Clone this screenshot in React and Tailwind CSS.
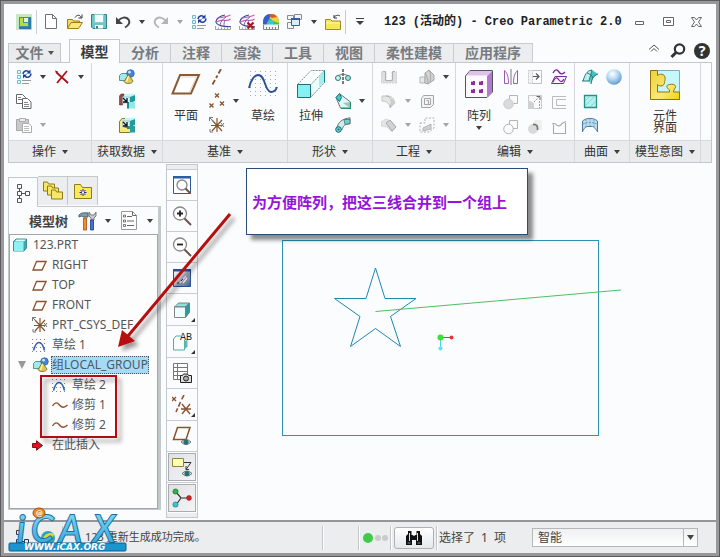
import React from "react";

/* ---------- small helpers ---------- */

function Svg({ size = 16, w, h, box, children, className = "" }) {
  const width = w || size;
  const height = h || size;
  return (
    <svg
      width={width}
      height={height}
      viewBox={box || `0 0 ${width} ${height}`}
      fill="none"
      className={`block shrink-0 ${className}`}
      aria-hidden="true"
    >
      {children}
    </svg>
  );
}

function Caret({ dim, label = "更多" }) {
  return (
    <button type="button" aria-label={label} className="flex h-6 w-[14px] shrink-0 items-center justify-center">
      <Svg w={6} h={4}>
        <path d="M0 0h6L3 4z" fill={dim ? "#a5a5a5" : "#3f3f3f"} />
      </Svg>
    </button>
  );
}

function Tool({ label, children }) {
  return (
    <button type="button" aria-label={label} className="flex size-6 shrink-0 items-center justify-center">
      {children}
    </button>
  );
}

const Blank = () => <div className="h-6 w-[14px]" />;

/* ---------- icons ---------- */

const Logo = () => (
  <Svg>
    <rect width="16" height="16" rx="1" fill="#a9cfe0" />
    <path d="M0 0h16v4H4v12H0z" fill="#c7e6c1" />
    <path d="M3 3h10v10H3z" fill="#3e8fa8" />
    <path d="M4 4h3v5h5v3H4z" fill="#b5dd3c" />
    <path d="M8 4h4v4H8z" fill="#e9f6c9" />
    <path d="M13 3v10H3v2h12V3z" fill="#3179a5" />
  </Svg>
);
const NewDoc = () => (
  <Svg>
    <path d="M2.500.5h7l4 4v10h-11z" fill="#fff" stroke="#707070" />
    <path d="M9.500.5v4h4" stroke="#707070" />
  </Svg>
);
const OpenFolder = () => (
  <Svg>
    <path d="M.5 14V5.500h5l1 1.500h6v2" fill="#f3dc62" stroke="#9a7d18" />
    <path d="M.5 14.500 4 8.500h11.500l-4 6z" fill="#ffe878" stroke="#9a7d18" />
    <path d="M8 3.500c2-3 5-3 6 0M11.500 4h3.500V.5" stroke="#333" />
  </Svg>
);
const Save = () => (
  <Svg>
    <path d="M.5.500h15v14H2L.5 13z" fill="#6cc6cc" stroke="#3f7d88" />
    <rect x="3.500" y=".5" width="9" height="8" fill="#f2fdff" stroke="#8cc" />
    <path d="M4 11h8v3.500H4z" fill="#fff" />
    <path d="M5 12h2v2.500H5z" fill="#3f7d88" />
  </Svg>
);
const Undo = ({ dim }) => (
  <Svg>
    <path d="M3 7c3-4 8-4.500 10.500-1.500 2 3 0 6-3.500 8" stroke={dim ? "#b5b5b5" : "#444"} strokeWidth="2" />
    <path d="M1 3v7h7z" fill={dim ? "#b5b5b5" : "#444"} />
  </Svg>
);
const Redo = () => (
  <div className="-scale-x-100">
    <Undo dim />
  </div>
);
const Regen = () => (
  <Svg>
    <path d="M1.500 1.500h3v3h-3zM1.500 6.500h3v3h-3zM1.500 11.500h3v3h-3z" fill="#e5ffff" stroke="#6cbcc8" />
    <path d="M6 11.500h9M6 14.500h7" stroke="#999" />
    <path d="M7 5c0-3 4-4.500 6-2M15 4.500c0 3.500-4 5-6 2.500" stroke="#1c3f9e" strokeWidth="1.500" />
    <path d="M14.500.5v4h-4zM7 9.500v-4h4z" fill="#1c3f9e" />
  </Svg>
);
const Mesh = ({ off }) => (
  <Svg>
    <path d="M.5 12v3.500h15V12M3.500 13.500v2M6.500 13.500v2M9.500 13.500v2M12.500 13.500v2" stroke="#8a8a8a" strokeWidth=".8" />
    <path d="M15.500 12.500C8 13 1.500 11 1 8c-.5-3 4-6 9-7" stroke="#39479a" strokeWidth="1.200" />
    <path d="M3 4c4-.5 8-1 12.500-3M1.500 8c4-2 7-2 9-1.500 2 0 4-.5 5-1.500" stroke="#c85aae" strokeWidth="1.200" />
    <path d="M5 11c1-4 3-6 6-8M9 12c0-2 0-4 1-6" stroke="#7a50b0" strokeWidth=".9" />
    {off && <path d="M8.500 8.500l6 6M14.500 8.500l-6 6" stroke="#b0141c" strokeWidth="2.200" />}
  </Svg>
);
const ColorDome = () => (
  <Svg>
    <path d="M0 9C0 3 3 0 8 0s8 3 8 9v2H0z" fill="#38c35a" />
    <path d="M0 9C0 3 3 0 8 0L6 5l-3 6H0z" fill="#3b58d6" />
    <path d="M8 0c5 0 8 3 8 9l-6-2-3-3z" fill="#e8d637" />
    <path d="M8 0c3 0 5 1 6 3L9 4 6 2z" fill="#e0552c" />
    <path d="M4 9c1-3 5-4 7-1l-1 3H4z" fill="#33c8d8" />
    <path d="M0 10.500h16v5H0z" fill="#f2f2f2" />
    <path d="M.5 11v4.500h15V11M3.500 13v2M6.500 13v2M9.500 13v2M12.500 13v2" stroke="#777" strokeWidth=".9" />
  </Svg>
);
const Windows = () => (
  <Svg>
    <path d="M.5 1.500h6v4h-6zM7.500.500h7v5h-7zM.5 8.500h6v6h-6z" fill="#f4f4f4" stroke="#8b8b8b" />
    <path d="M4.500 4.500h8v7h-8z" fill="#dcecff" stroke="#2f5fa5" />
    <path d="M4 4h9v2H4z" fill="#2f5fa5" />
  </Svg>
);
const YellowFolder = () => (
  <Svg>
    <path d="M.5 15.500v-10h5l1.500 1.500h8.500v8.500z" fill="#f5e65c" stroke="#a18a22" />
    <path d="M1 9h14" stroke="#fff7ae" />
    <path d="M9 3.500c1-2 4-3 6-1.500M9 1v3h3" stroke="#333" />
  </Svg>
);
const RedX = () => (
  <Svg>
    <path d="M2 3l12 11M13 2 3 14" stroke="#a8121a" strokeWidth="1.800" />
    <path d="M1 2l3 1M14 14l-2-1" stroke="#a8121a" />
  </Svg>
);
const Copy = () => (
  <Svg>
    <path d="M.5 1.500h6l3 3v6h-9z" fill="#fff" stroke="#666" />
    <path d="M2 4.500h3M2 6.500h4" stroke="#777" />
    <path d="M6.500 5.500h5l3.500 3.500v6.500H6.500z" fill="#fff" stroke="#666" />
    <path d="M8 9.500h4M8 11.500h5M8 13.500h5" stroke="#888" />
  </Svg>
);
const Paste = () => (
  <Svg>
    <path d="M.5 2.500h12v11H.5z" fill="#c9c9c9" stroke="#a9a9a9" />
    <path d="M3.500 1.500h6v3h-6z" fill="#eee" stroke="#aaa" />
    <path d="M6.500 6.500h6l3 2.500v6.500h-9z" fill="#fff" stroke="#aaa" />
    <path d="M8 9.500h5M8 11.500h5M8 13.500h5" stroke="#bbb" />
  </Svg>
);
const UserFeature = () => (
  <Svg>
    <path d="M.5 6.500 2.500 4.500h6v5l-2 2h-6z" fill="#a5eaea" stroke="#2e7f90" strokeWidth=".8" />
    <circle cx="11.500" cy="4.500" r="3.800" fill="#3f85e0" stroke="#1d4fa0" strokeWidth=".6" />
    <circle cx="10.500" cy="3.200" r="1.400" fill="#cfe4ff" />
    <path d="M9.500 5.500 14 12c-.5 3-7.500 3.500-9 .500z" fill="#dcc85a" stroke="#6f5f14" strokeWidth=".8" />
    <path d="M9.500 7 7.500 13" stroke="#fff6b0" strokeWidth="1.300" />
  </Svg>
);
const CopyGeom = ({ yellow }) => (
  <Svg>
    {yellow ? (
      <path d="M.5 4.500 3 1.500h3v9h5v5H.5z" fill="#f6ee8a" stroke="#8c7a1c" />
    ) : (
      <path d="M.5 3 2 1h3v8H3.500v3H.5z" fill="#9a4a46" stroke="#6d2a2a" strokeWidth=".6" />
    )}
    <path d="M4 4 6.500.8H16V4z" fill="#c5f5f5" />
    <path d="M3.500 4h7.500v6H3.500z" fill="#d6fafa" stroke="#7ab" strokeWidth=".6" />
    <path d="M11 4l5-2v6l-5 2z" fill="#1f9b9d" />
    <path d="M8 9h8v6.500H8z" fill={yellow ? "#2d9d98" : "#8fe9e8"} />
    <path d="M8 9h2v6.500H8z" fill="#178f92" />
    <path d="M4 5l3.500 3.500M8 5v4H4" stroke="#111" strokeWidth="1.300" />
    {yellow && <path d="M1 12h10v3H1z" fill="#f6e87a" />}
  </Svg>
);
const PlaneBig = () => (
  <Svg w={30} h={28}>
    <path d="M9 5h19l-8 18.500H1.500z" fill="#fff" stroke="#8a5a34" strokeWidth="2" />
    <path d="M10 7h15.500l-7 15" stroke="#e3d3c0" strokeWidth="1" />
  </Svg>
);
const AxisIcon = () => (
  <Svg>
    <path d="M12 0 9.500 4.500M8.500 6.500 7 9M6 11l-2.500 4.500" stroke="#8b5230" strokeWidth="1.800" />
  </Svg>
);
const Points = () => (
  <Svg>
    <path d="M6 .5l4 4M10 .5l-4 4M.5 10.500l4 4M4.500 10.500l-4 4M11 8.500l4 4M15 8.500l-4 4" stroke="#8b5230" strokeWidth="1.300" />
  </Svg>
);
const Csys = () => (
  <Svg>
    <path d="M3 3l10 11M13 3 3 14M8 1v14M2 8.500h11" stroke="#8b5230" strokeWidth="1.200" />
    <path d="M.5.500l4 4M.5 4V.5H4M1 12v3h3M12 6l3 4M15 6l-3 4" stroke="#777" strokeWidth="1" />
  </Svg>
);
const dotRows = [1, 5, 9, 13, 17, 21, 25];
const SketchBig = () => (
  <Svg w={30} h={28}>
    {dotRows.map((y) => (
      <path key={y} d={`M2 ${y + 0.5}h28`} stroke="#a3aebf" strokeWidth="1" strokeDasharray="1 4" />
    ))}
    <path d="M1 18C3 9 7 5 10 5c8 0 6 16 13 17 3 0 5-2 6-5" stroke="#2a4f94" strokeWidth="1.900" />
  </Svg>
);
const Extrude = () => (
  <Svg w={28} h={28}>
    <path d="M13.500 14.500 27.500.500v12L14 27z" fill="#eaffff" stroke="#888" strokeDasharray="2 1" />
    <path d="M.5 14.500 14 .5h13.500L14 14.500z" fill="#f7ffff" stroke="#888" strokeDasharray="2 1" />
    <path d="M22 6 27 1v11l-5 5z" fill="#a5ecea" />
    <path d="M27.500.5v12" stroke="#178080" />
    <path d="M.5 14.500h13v13H.5z" fill="#86f1f2" stroke="#276a78" />
  </Svg>
);
const Revolve = () => (
  <Svg>
    <path d="M8 0v16" stroke="#222" strokeWidth="1.200" strokeDasharray="3 1" />
    <circle cx="3" cy="9" r="2.500" fill="#c5f3f0" stroke="#2a7a78" />
    <circle cx="13" cy="9" r="2.500" fill="#9be0dc" stroke="#2a7a78" />
    <path d="M3 6.500 8 5l5 1.500" stroke="#777" />
  </Svg>
);
const Blend = () => (
  <Svg>
    <path d="M5 1 1 4.500 5.500 15h10V9z" fill="#d9f8f6" stroke="#5a7a7a" />
    <path d="M1 4.500 4.500.500l2 4-2 4z" fill="#42cbc8" stroke="#1c6f6f" />
    <path d="M8 10l7-1v6z" fill="#b5bcbc" />
    <path d="M6 15.500h9.500V9" stroke="#258d6a" strokeWidth="1.200" />
  </Svg>
);
const Sweep = () => (
  <Svg>
    <path d="M2 11C3 5 7 2 15 .8v6c-5 .2-7 2-8 6z" fill="#cdeeed" stroke="#5a7a7a" />
    <path d="M9 2.500h6v4l-5 1z" fill="#6fd2cf" stroke="#555" strokeWidth=".7" />
    <circle cx="3.500" cy="12.500" r="2.800" fill="#68e0de" stroke="#195f66" />
    <circle cx="3.500" cy="12.500" r="1" fill="#195f66" />
  </Svg>
);
const Hole = () => (
  <Svg>
    <path d="M0 3h5v9h6V3h5v11H0z" fill="#dedede" stroke="#d0d0d0" strokeDasharray="2 1" />
    <path d="M2 2.500h2.500v9h7v-9H14" stroke="#b0b0b0" />
  </Svg>
);
const Round = () => (
  <Svg>
    <path d="M1 3h6c4 0 6 3 7 7l-5 5c0-4-3-7-8-7z" fill="#e6e6e6" stroke="#c5c5c5" />
    <path d="M5 3c3 0 5 2 6 6l-2 5" stroke="#aaa" />
    <path d="M9 5c3 1 4 3 5 5l-4 3z" fill="#cdcdcd" />
  </Svg>
);
const Chamfer = () => (
  <Svg>
    <path d="M0 5l5-3 5 2 5 6-4 5-5-5-6-1z" fill="#e6e6e6" stroke="#ccc" strokeDasharray="2 1" />
    <path d="M5 6l4-3 6 7-4 4z" fill="#d3d3d3" stroke="#ababab" />
  </Svg>
);
const Draft = () => (
  <Svg>
    <path d="M1 8h5v6H1z" fill="#e9e9e9" stroke="#b5b5b5" />
    <path d="M6 4l4-3 5 5v5l-6 4-3-1z" fill="#d3d3d3" stroke="#a5a5a5" />
    <path d="M6 4c2 3 3 6 3 11M10 1c2 3 2 6 1 12" stroke="#a5a5a5" />
  </Svg>
);
const Shell = () => (
  <Svg>
    <path d="M4.500 2.500h10v9l-3 3h-9v-9z" fill="#f3f3f3" stroke="#a5a5a5" />
    <path d="M5.500 5.500h6v6h-6zM7.500 7.500h2v4" stroke="#a5a5a5" />
  </Svg>
);
const Rib = () => (
  <Svg>
    <path d="M1 6h5V1h9v10l-5 4H1z" stroke="#aeaeae" strokeDasharray="2 1.500" />
    <path d="M4 11l8-4v5l-8 2z" fill="#cfcfcf" stroke="#b5b5b5" />
  </Svg>
);
const PatternBig = () => (
  <Svg w={28} h={28}>
    <path d="M.5 6 5 .5h22.500V22L22 27.500H.5z" fill="#fff" stroke="#555" />
    <path d="M22 6l5-5v21l-5 5z" fill="#b07ad0" />
    <path d="M1.500 5.500 5 1h22l-5 4.500z" fill="#dcc3ea" />
    <path d="M1 6h21v21H1z" fill="#fdf9ff" />
    {[11, 19].map((y) =>
      [6, 14].map((x) => (
        <g key={`${x}-${y}`}>
          <path d={`M${x} ${y}h4v4h-4z`} fill="#8c2ba3" />
          <path d={`M${x} ${y}h2v1h-2z`} fill="#d9a5e6" />
        </g>
      ))
    )}
  </Svg>
);
const Mirror = () => (
  <Svg>
    <path d="M1.500 14.500V1.500C4 4 5.500 7 5.500 14.500zM14.500 14.500V1.500C12 4 10.500 7 10.500 14.500z" stroke="#9a5ab0" />
    <path d="M8 0v16" stroke="#777" />
  </Svg>
);
const Extend = () => (
  <Svg>
    <path d="M5 1.500h9.500v13H5" stroke="#c0c0c0" />
    <path d="M1.500 1.500h4v13h-4z" fill="#f1f1f1" stroke="#c8c8c8" strokeDasharray="2 1" />
    <path d="M6 7.500h6M9 4.500l3 3-3 3" stroke="#555" strokeWidth="1.200" />
  </Svg>
);
const Project = () => (
  <Svg>
    <path d="M2 4c2-4 4-4 6-1s4 2 6 0" stroke="#7e2697" strokeWidth="1.400" />
    <path d="M4 7.500h11.500l-3 7H.5z" fill="#fbf3fd" stroke="#7e2697" />
    <path d="M2 13c2-5 4-5 6-2s4 1 5-1" stroke="#7e2697" strokeWidth="1.200" />
  </Svg>
);
const Merge = ({ hollow }) => (
  <Svg>
    <path d="M6.500 1.500h8v8h-8z" fill="#fafafa" stroke="#b5b5b5" />
    <circle cx="5.500" cy="10" r="4.800" fill={hollow ? "#fafafa" : "#dadada"} stroke={hollow ? "#b5b5b5" : "#cfcfcf"} />
  </Svg>
);
const Offset = () => (
  <Svg>
    <path d="M1.500 1.500h13v13h-13z" fill="#fafafa" stroke="#c8c8c8" />
    <path d="M1 6l6 3v6H1z" fill="#d0d0d0" />
    <path d="M12.500 7v7M7 8l6-6" stroke="#999" strokeDasharray="2 1" />
    <path d="M9.500 2.500H13V6" stroke="#666" />
  </Svg>
);
const Thicken = () => (
  <Svg>
    <path d="M15 2.500H1.500v12H15M15 5.500H5.500v6H15" stroke="#bbb" />
  </Svg>
);
const Intersect = () => (
  <Svg>
    <path d="M7 1h8v10H7z" fill="#efefef" />
    <circle cx="6" cy="10" r="5" fill="#dadada" />
    <path d="M6 5.500c4-.5 5 2 4.500 5.500" stroke="#777" strokeWidth="1.800" />
  </Svg>
);
const Solidify = () => (
  <Svg>
    <path d="M1 5c2-1 4 0 5 1.500 2 1 4 0 5-2l4-2M2.500 5.500v9h12V4" stroke="#aaa" strokeWidth="1.100" />
  </Svg>
);
const Boundary = () => (
  <Svg>
    <path d="M1 12C2.500 6 5 2 11 1l5 4c-5 2-6 5-7 10-2-2-4-3-8-3z" fill="#b9f0ee" />
    <path d="M10 1.500c2 1 4 2 6 4-4 1-6 5-7 10L8 9z" fill="#42c4bb" />
    <path d="M0 12h8M5 4c3 1 5 2 6 5M10 1C4 2 3 6 1 12M16 5c-5 2-6 5-7 10M10 1c-1 4-2 7-3 11" stroke="#246c7a" strokeWidth=".9" />
  </Svg>
);
const FillIcon = () => (
  <Svg>
    <path d="M2.500 2.500h12v12h-12z" fill="#b4f1ea" stroke="#2a8f8b" strokeWidth="1.300" />
    <path d="M3 8l5-5M3 13 13 3M8 14l6-6" stroke="#83d8d0" />
  </Svg>
);
const StyleIcon = () => (
  <Svg>
    <path d="M.5 4c4-3.500 11-3.500 15 0v11c-2-4-4-5-5-5.500H5C3 10 1 13 .5 15z" fill="#bcdcee" stroke="#4d7ca0" />
    <path d="M4 2.500V10M8 1.500V9M12 2.500V10M1 7c4-2 10-2 14 0" stroke="#6ea5c8" strokeDasharray="2 1" />
  </Svg>
);
const Sphere = () => (
  <Svg>
    <defs>
      <radialGradient id="sphere" cx=".4" cy=".3" r=".8">
        <stop offset="0" stopColor="#fff" />
        <stop offset=".4" stopColor="#bcdcf5" />
        <stop offset="1" stopColor="#4f8cc4" />
      </radialGradient>
    </defs>
    <circle cx="8" cy="8" r="7.800" fill="url(#sphere)" />
  </Svg>
);
const Puzzle = () => (
  <Svg w={30} h={30}>
    <defs>
      <linearGradient id="gold" x1="0" y1="0" x2="1" y2="1">
        <stop offset="0" stopColor="#f0d235" />
        <stop offset=".6" stopColor="#f8e875" />
        <stop offset="1" stopColor="#f3d500" />
      </linearGradient>
    </defs>
    <path d="M.5.500h29v29H.5z" fill="#c4f8fa" stroke="#8ab" />
    <path
      d="M.5.500h7v5c2-2 7-2 7.500 2 .5 3-.5 3.500-.5 5 0 3-4 5-7 2v7.500h12v-2c-3-2-4-5 0-5.500 3-.5 5.500-.5 6 2 .3 2-2 2.500-2 5.500h6v7.500H.5z"
      fill="url(#gold)"
      stroke="#97700e"
    />
  </Svg>
);

const TreeTab = () => (
  <Svg w={16} h={20}>
    <path d="M2.500 1.500h4v4h-4zM2.500 8.500h4v4h-4zM10.500 8.500h4v4h-4zM2.500 15.500h4v4h-4zM4.500 5.500v3M4.500 12.500v3M6.500 10.500h4" stroke="#555" />
  </Svg>
);
const Folders = () => (
  <Svg w={20} h={20}>
    {[0, 4, 8].map((d) => (
      <path key={d} d={`M${d + 0.5} ${d + 10}v-9h4l1 2h6v7z`} fill="#f6e766" stroke="#8e7b21" />
    ))}
  </Svg>
);
const FavFolder = () => (
  <Svg w={18} h={16}>
    <path d="M.5 15.500V1.500h6l2 3h9v11z" fill="#f8ea5a" stroke="#8e7b21" />
    <path d="M9 6v7M5.500 9.500h7M6.500 7l5 5M11.500 7l-5 5" stroke="#1b2f9c" />
    <path d="M8 8.500h2v2H8z" fill="#fff" />
  </Svg>
);
const Tools = () => (
  <Svg w={19} h={20}>
    <path d="M1 4c2-2 4-2.500 9-2v4H6C4 5 3 5 1 6z" fill="#7fa0ab" stroke="#46606a" />
    <path d="M5.500 7h3v12h-3z" fill="#f28d2c" stroke="#a8481a" strokeWidth=".8" />
    <path d="M11 1v4l2 2v2h3V7l2-2V1l-2 3h-3z" fill="#c9c9c9" stroke="#666" strokeWidth=".8" />
    <path d="M12.500 9h3v10h-3z" fill="#3f73cf" stroke="#1d3c88" strokeWidth=".8" />
  </Svg>
);
const ListIcon = () => (
  <Svg w={16} h={19}>
    <path d="M.5.500h11l4 4v14H.5z" fill="#fff" stroke="#999" />
    <path d="M11.500.500v4h4M6 5.500h5M6 10h7M6 14.500h7" stroke="#666" />
    <path d="M2.500 4h2v2h-2zM2.500 9h2v2h-2zM2.500 13.500h2v2h-2z" stroke="#555" strokeWidth=".8" />
  </Svg>
);

const Part = () => (
  <Svg w={14} h={14}>
    <path d="M.5 3.500 3 1h10.500v9L11 13H.5z" fill="#3aa9ad" stroke="#2c7780" strokeWidth=".8" />
    <path d="M1 4h9.500v9H1z" fill="#8cf2f3" />
    <path d="M1.500 3.500 3.500 1.500H13l-2 2z" fill="#dcffff" />
  </Svg>
);
const PlaneSm = () => (
  <Svg w={15} h={11}>
    <path d="M4.500 1.500h9.500l-4 8.500H1z" stroke="#8b5230" strokeWidth="1.300" fill="#fff" />
  </Svg>
);
const SketchSm = () => (
  <Svg w={14} h={13}>
    <path d="M0 .5h14M0 4.500h14M0 8.500h14M0 12.500h14" stroke="#5a8fd0" strokeDasharray="1 3" />
    <path d="M1.500 11.500C3 6 5 3.500 7 3.500s4 2 5.500 8" stroke="#2a60b8" strokeWidth="1.500" />
  </Svg>
);
const TrimSm = () => (
  <Svg w={16} h={8}>
    <path d="M.5 5C3 1 5 1 7.500 4s5 3 8 0" stroke="#8b5230" strokeWidth="1.400" />
  </Svg>
);
const InsertArrow = () => (
  <Svg w={11} h={11}>
    <path d="M.5 3.500h4V.8l6 4.700-6 4.700V7.500h-4z" fill="#e0101c" stroke="#7d1116" />
  </Svg>
);

const Lens = ({ sign, framed }) => (
  <Svg size={20}>
    {framed && <path d="M1.500 1.500h17v17h-17z" fill="#fff" stroke="#2f5b9e" />}
    {framed && <path d="M1 1h18v2.500H1z" fill="#2b5ba5" />}
    <circle cx={framed ? 10 : 8} cy={framed ? 10 : 7.5} r={framed ? 5 : 6.5} fill="#fdfdfd" stroke="#888" strokeWidth="1.300" />
    <path d={framed ? "M13.500 13.500l5 5" : "M12.500 12.500l6.500 6.500"} stroke="#6b5548" strokeWidth="2" />
    {sign && <path d={sign === "+" ? "M5 7.500h6M8 4.500v6" : "M5 7.500h6"} stroke="#222" strokeWidth="1.800" />}
  </Svg>
);
const Repaint = () => (
  <Svg size={20}>
    <defs>
      <linearGradient id="repaint" x1="0" y1="0" x2="1" y2="1">
        <stop offset="0" stopColor="#fdfdff" />
        <stop offset=".5" stopColor="#b5bccf" />
        <stop offset="1" stopColor="#36558f" />
      </linearGradient>
    </defs>
    <path d="M1.500 1.500h17v17h-17z" fill="url(#repaint)" stroke="#2a4f94" />
    <path d="M1 1h18v2.500H1z" fill="#2a4f94" />
    <path d="M8 15l6-7M11 15l4-5" stroke="#fff" strokeWidth="1.300" />
    <path d="M5 15h2M9 13l2-2" stroke="#333" />
  </Svg>
);
const DisplayCube = () => (
  <Svg size={20}>
    <path d="M2.500 7 6.500 3h11l-4 4z" fill="#8ce0e0" stroke="#777" strokeWidth=".9" />
    <path d="M13.500 7l4-4v9.500l-4 5z" fill="#2f9a9b" stroke="#777" strokeWidth=".9" />
    <path d="M2.500 7h11v10.500h-11z" fill="#eefcfc" stroke="#777" strokeWidth=".9" />
  </Svg>
);
const ABIcon = () => (
  <Svg size={20}>
    <path d="M9 4H4L1.500 7v11h11V8" fill="#fafefe" stroke="#5aa" />
    <path d="M12.500 9.500l3-2.500v7.500l-3 3z" fill="#5fb8b8" />
    <text x="8" y="8" fontSize="10" fontFamily="Liberation Mono" fill="#222">AB</text>
  </Svg>
);
const CameraTable = () => (
  <Svg size={20}>
    <path d="M1.500.500h14v16h-14zM1.500 4.500h14M1.500 8.500h14M1.500 12.500h14M5.500.500v16" fill="#fff" stroke="#777" />
    <path d="M8.500 12.500h2l1-1.500h4l1 1.500h3v7h-11z" fill="#ddd" stroke="#222" />
    <circle cx="14" cy="15.500" r="2.500" fill="#aaa" stroke="#222" />
  </Svg>
);
const DatumDisplay = () => (
  <Svg size={20}>
    <path d="M12 0 9.500 5M8.500 7 4 17" stroke="#8b5230" strokeWidth="1.600" strokeDasharray="5 2" />
    <path d="M0 2l4 4M4 2 0 6M10 9l8 10M18 9l-8 10M9 14h10" stroke="#8b5230" strokeWidth="1.300" />
  </Svg>
);
const Eye = ({ x, y }) => (
  <g>
    <path d={`M${x} ${y + 3}q5-5 10 0q-5 5-10 0z`} fill="#d9e8e8" stroke="#555" strokeWidth=".8" />
    <circle cx={x + 5} cy={y + 3} r="2.600" fill="#27707a" />
  </g>
);
const PlaneEye = () => (
  <Svg size={20}>
    <path d="M5.500 1.500H18l-4 12H1.500z" fill="#fff" stroke="#8b5230" strokeWidth="1.500" />
    <Eye x={9} y={13} />
  </Svg>
);
const NoteEye = () => (
  <Svg size={20}>
    <path d="M.5 1.500h11v8H.5z" fill="#ffffb4" stroke="#8c8a3a" />
    <path d="M12 5.500h7l-5 7M14 9v3.500h3" stroke="#333" />
    <Eye x={10} y={13.500} />
  </Svg>
);
const SpinCenter = () => (
  <Svg size={20}>
    <path d="M4 4l5 6h8M9 10l-5 7" stroke="#333" strokeWidth="1.200" />
    <circle cx="3.500" cy="3.500" r="2.600" fill="#2fb541" stroke="#175f20" strokeWidth=".6" />
    <circle cx="17" cy="10" r="2.400" fill="#dc2020" stroke="#7d1010" strokeWidth=".6" />
    <circle cx="3.500" cy="16.500" r="2.600" fill="#35c9cf" stroke="#176a6f" strokeWidth=".6" />
  </Svg>
);
const Binoculars = () => (
  <Svg w={18} h={16}>
    <path d="M3 1h3.500v4h1L9 6l1.500-1h1V1H15v3l2 2v9h-6v-5H7v5H1V6l2-2z" fill="#111" />
    <path d="M4.500 3v8M12.500 3v8" stroke="#ddd" />
    <path d="M2.500 13h3M12.500 13h3" stroke="#888" />
  </Svg>
);

/* ---------- title bar ---------- */

function TitleBar() {
  return (
    <header className="flex h-[35px] items-center pl-3 pr-2">
      <Logo />
      <div className="ml-1 mr-[2px] h-6 w-px bg-[#d0d0d0]" />
      <Tool label="新建"><NewDoc /></Tool>
      <Tool label="打开"><OpenFolder /></Tool>
      <Tool label="保存"><Save /></Tool>
      <Tool label="撤消"><Undo /></Tool>
      <Caret />
      <Tool label="重做"><Redo /></Tool>
      <Caret dim />
      <Tool label="重新生成"><Regen /></Tool>
      <Tool label="网格"><Mesh /></Tool>
      <Tool label="关闭网格"><Mesh off /></Tool>
      <Tool label="外观"><ColorDome /></Tool>
      <Tool label="窗口"><Windows /></Tool>
      <Caret />
      <Tool label="关闭窗口"><YellowFolder /></Tool>
      <div className="mr-[6px] h-6 w-px bg-[#c9c9c9]" />
      <button type="button" aria-label="自定义" className="flex h-6 w-4 items-center justify-center">
        <Svg w={8} h={7}>
          <path d="M0 .5h8" stroke="#3f3f3f" />
          <path d="M0 3h8L4 7z" fill="#3f3f3f" />
        </Svg>
      </button>
      <h1 className="ml-4 flex-1 whitespace-pre font-['Liberation_Mono','Noto_Sans_CJK_SC',monospace] text-[12px] font-bold leading-4 text-[#222]">
        {"123 (活动的) - Creo Parametric 2.0"}
      </h1>
      <div className="flex gap-1">
        <Tool label="最小化">
          <Svg w={10} h={8}><path d="M.5 3.500h8v3h-8z" fill="#fff" stroke="#666" /></Svg>
        </Tool>
        <Tool label="最大化">
          <Svg w={11} h={10}><path d="M.5.500h10v8H.5zM3.500 3.500h4v2h-4z" fill="#fff" stroke="#666" /></Svg>
        </Tool>
        <Tool label="关闭">
          <Svg w={11} h={10}>
            <path d="M.5.500h3l2 2.500 2-2.500h3L7.500 5l3 4.500h-3l-2-2.500-2 2.500h-3l3-4.500z" fill="#fff" stroke="#666" />
          </Svg>
        </Tool>
      </div>
    </header>
  );
}

/* ---------- ribbon ---------- */

const ribbonTabs = ["分析", "注释", "渲染", "工具", "视图", "柔性建模", "应用程序"];

function RibbonTabs() {
  return (
    <nav className="flex h-[23px] items-end pl-1 pr-1 text-[14px] font-bold leading-4 text-[#777b80]">
      <button type="button" className="flex h-[19px] w-[53px] items-center justify-center gap-1 border border-b-0 border-[#c3c8cb] bg-[#e9ebed]">
        文件
        <Svg w={6} h={4}><path d="M0 0h6L3 4z" fill="#555" /></Svg>
      </button>
      <div className="w-2" />
      <button type="button" className="relative top-px z-10 h-[24px] w-[51px] border border-b-0 border-[#c3c8cb] bg-[#fbfcfd] text-[#3d3d3d]">
        模型
      </button>
      {ribbonTabs.map((t) => (
        <button
          key={t}
          type="button"
          className={`flex h-[19px] items-center justify-center border-r border-t border-[#c9cdd0] bg-[#ebedef] ${
            t.length > 2 ? "w-[79px]" : "w-[51px]"
          }`}
        >
          {t}
        </button>
      ))}
      <div className="ml-auto flex h-full items-center gap-1">
        <button type="button" aria-label="折叠功能区" className="flex size-5 items-center justify-center">
          <Svg w={12} h={9} className="mb-1">
            <path d="M1 5.500 6 1l5 4.500M3 7.500l3-3 3 3" stroke="#555" />
          </Svg>
        </button>
        <button type="button" aria-label="搜索" className="flex size-5 items-center justify-center">
          <Svg>
            <circle cx="9.500" cy="6" r="4.700" stroke="#333" strokeWidth="2.200" />
            <path d="M6 9.500 1.500 14" stroke="#333" strokeWidth="3" />
          </Svg>
        </button>
        <button type="button" aria-label="帮助" className="flex size-5 items-center justify-center">
          <span className="flex size-4 items-center justify-center rounded-full bg-[#333] text-[14px] font-bold leading-4 text-white">?</span>
        </button>
      </div>
    </nav>
  );
}

function Group({ title, width, children, className = "", last }) {
  return (
    <section className={`flex shrink-0 flex-col border-r border-[#d5d9db] ${width}`}>
      <div className={`flex h-[77px] pt-[2px] ${className}`}>{children}</div>
      <button
        type="button"
        className="flex h-[22px] items-center justify-center gap-[6px] whitespace-nowrap border-t border-[#d5d9db] bg-[#e9ebed] text-[12px] text-[#333]"
      >
        {title}
        {!last && <Svg w={6} h={4}><path d="M0 0h6L3 4z" fill="#3f3f3f" /></Svg>}
      </button>
    </section>
  );
}

const Col = ({ children }) => <div className="flex flex-col">{children}</div>;

function BigTool({ icon, children, caret }) {
  return (
    <button type="button" className="flex w-9 shrink-0 flex-col items-center pt-[5px] text-[12px] leading-3 text-[#333]">
      <span className="flex h-[36px] items-start justify-center">{icon}</span>
      <span className="block pt-1">{children}</span>
      {caret && <Svg w={6} h={4} className="mt-1"><path d="M0 0h6L3 4z" fill="#3f3f3f" /></Svg>}
    </button>
  );
}

function Ribbon() {
  return (
    <div className="mx-1 flex overflow-hidden border border-[#c3c8cb] bg-[#fbfcfd]">
      <Group title="操作" width="w-[83px]" className="pl-[3px]">
        <Col>
          <Tool label="重新生成"><Regen /></Tool>
          <Tool label="复制"><Copy /></Tool>
          <Tool label="粘贴"><Paste /></Tool>
        </Col>
        <Col><Caret /><div className="h-6" /><Caret dim /></Col>
        <Tool label="删除"><RedX /></Tool>
        <Caret />
      </Group>
      <Group title="获取数据" width="w-[71px]" className="justify-center">
        <Col>
          <Tool label="用户定义特征"><UserFeature /></Tool>
          <Tool label="复制几何"><CopyGeom /></Tool>
          <Tool label="收缩包络"><CopyGeom yellow /></Tool>
        </Col>
      </Group>
      <Group title="基准" width="w-[125px]" className="pl-[5px]">
        <BigTool icon={<PlaneBig />}>平面</BigTool>
        <div className="ml-[1px]">
          <Tool label="轴"><AxisIcon /></Tool>
          <Tool label="点"><Points /></Tool>
          <Tool label="坐标系"><Csys /></Tool>
        </div>
        <Col><Blank /><Caret /></Col>
        <div className="ml-[2px]"><BigTool icon={<SketchBig />}>草绘</BigTool></div>
      </Group>
      <Group title="形状" width="w-[85px]" className="pl-[5px]">
        <BigTool icon={<Extrude />}>拉伸</BigTool>
        <div className="ml-[2px]">
          <Tool label="旋转"><Revolve /></Tool>
          <Tool label="混合"><Blend /></Tool>
          <Tool label="扫描"><Sweep /></Tool>
        </div>
        <Col><Blank /><Caret /></Col>
      </Group>
      <Group title="工程" width="w-[83px]" className="pl-1">
        <Col>
          <Tool label="孔"><Hole /></Tool>
          <Tool label="倒圆角"><Round /></Tool>
          <Tool label="倒角"><Chamfer /></Tool>
        </Col>
        <Col><Blank /><Caret dim /><Caret dim /></Col>
        <Col>
          <Tool label="拔模"><Draft /></Tool>
          <Tool label="壳"><Shell /></Tool>
          <Tool label="筋"><Rib /></Tool>
        </Col>
        <Col><Caret /><Blank /><Caret dim /></Col>
      </Group>
      <Group title="编辑" width="w-[119px]" className="pl-[5px]">
        <BigTool icon={<PatternBig />} caret>阵列</BigTool>
        <div className="ml-[2px] grid grid-cols-3">
          <Tool label="镜像"><Mirror /></Tool>
          <Tool label="延伸"><Extend /></Tool>
          <Tool label="投影"><Project /></Tool>
          <Tool label="修剪"><Merge /></Tool>
          <Tool label="偏移"><Offset /></Tool>
          <Tool label="加厚"><Thicken /></Tool>
          <Tool label="合并"><Merge hollow /></Tool>
          <Tool label="相交"><Intersect /></Tool>
          <Tool label="实体化"><Solidify /></Tool>
        </div>
      </Group>
      <Group title="曲面" width="w-[55px]" className="pl-[3px]">
        <Col>
          <Tool label="边界混合"><Boundary /></Tool>
          <Tool label="填充"><FillIcon /></Tool>
          <Tool label="样式"><StyleIcon /></Tool>
        </Col>
        <Tool label="自由式"><Sphere /></Tool>
      </Group>
      <Group title="模型意图" width="w-[71px]" className="justify-center">
        <BigTool icon={<Puzzle />}>元件<br />界面</BigTool>
      </Group>
      <div className="flex flex-1 flex-col">
        <div className="h-[77px]" />
        <div className="h-[22px] border-t border-[#d5d9db] bg-[#e9ebed]" />
      </div>
    </div>
  );
}

/* ---------- model tree ---------- */

const rootItems = [
  { icon: <PlaneSm />, name: "RIGHT" },
  { icon: <PlaneSm />, name: "TOP" },
  { icon: <PlaneSm />, name: "FRONT" },
  { icon: <Csys />, name: "PRT_CSYS_DEF" },
  { icon: <SketchSm />, name: "草绘 1" },
];
const groupItems = [
  { icon: <SketchSm />, name: "草绘 2" },
  { icon: <TrimSm />, name: "修剪 1" },
  { icon: <TrimSm />, name: "修剪 2" },
];

function TreeRow({ icon, name, indent }) {
  return (
    <li className={`flex h-5 items-center whitespace-nowrap ${indent}`}>
      <span className="flex w-5 shrink-0 items-center">{icon}</span>
      {name}
    </li>
  );
}

function ModelTree() {
  return (
    <aside className="flex w-[153px] shrink-0 flex-col pb-[10px] pt-[13px]">
      <div className="flex">
        <button type="button" aria-label="模型树" className="relative top-px flex h-[30px] w-[30px] items-center justify-center border border-b-0 border-[#c3c8cb] bg-[#fbfcfd]"><TreeTab /></button>
        <button type="button" aria-label="文件夹浏览器" className="flex h-[29px] w-[30px] items-center justify-center border-r border-t border-[#c3c8cb] bg-[#ebedef]"><Folders /></button>
        <button type="button" aria-label="收藏夹" className="flex h-[29px] w-[30px] items-center justify-center border-r border-t border-[#c3c8cb] bg-[#ebedef]"><FavFolder /></button>
      </div>
      <div className="flex flex-1 flex-col border border-r-[3px] border-[#c3c8cb]">
        <div className="flex h-[27px] shrink-0 items-center pl-5">
          <h2 className="w-[43px] whitespace-nowrap text-[13px] font-bold leading-5 text-[#444]">模型树</h2>
          <button type="button" aria-label="设置" className="ml-[6px]"><Tools /></button>
          <div className="ml-1"><Caret /></div>
          <button type="button" aria-label="显示" className="ml-[6px]"><ListIcon /></button>
          <div className="ml-[6px]"><Caret /></div>
        </div>
        <ul className="flex-1 overflow-hidden border border-[#a3a6a9] bg-[#fdfdfe] text-[12px] leading-5 text-[#555]">
          <TreeRow icon={<Part />} name="123.PRT" indent="pl-[3px]" />
          {rootItems.map((r) => (
            <TreeRow key={r.name} {...r} indent="pl-[22px]" />
          ))}
          <li className="flex h-5 items-center whitespace-nowrap pl-2">
            <Svg w={8} h={8}><path d="M0 0h8L4 8z" fill="#999" /></Svg>
            <span className="ml-[7px] flex w-[18px] shrink-0"><UserFeature /></span>
            <span className="border border-dotted border-[#456] bg-[#a6dbf7] leading-4 text-[#4a5a66]">组LOCAL_GROUP</span>
          </li>
          {groupItems.map((r) => (
            <TreeRow key={r.name} {...r} indent="pl-[42px]" />
          ))}
          <TreeRow icon={<InsertArrow />} name="在此插入" indent="pl-[22px]" />
        </ul>
      </div>
    </aside>
  );
}

/* ---------- view toolbar ---------- */

const viewTools = [
  { label: "重新调整", icon: <Lens framed /> },
  { label: "放大", icon: <Lens sign="+" /> },
  { label: "缩小", icon: <Lens sign="-" /> },
  { label: "重画", icon: <Repaint /> },
  { label: "显示样式", icon: <DisplayCube />, flyout: true },
  { label: "已保存方向", icon: <ABIcon />, flyout: true },
  { label: "视图管理器", icon: <CameraTable /> },
  { label: "基准显示过滤器", icon: <DatumDisplay />, flyout: true },
  { label: "平面显示", icon: <PlaneEye /> },
  { label: "注释显示", icon: <NoteEye />, on: true },
  { label: "旋转中心", icon: <SpinCenter />, on: true },
];

function ViewToolbar() {
  return (
    <div className="ml-[5px] mt-px flex w-8 shrink-0 flex-col self-start border border-[#c3c8cb] bg-[#ebedef] pb-1 pt-1">
      {viewTools.map((t) => (
        <div key={t.label} className={`border-t border-[#c9cdd0] bg-[#fbfcfd] p-px ${t.flyout ? "h-8" : "h-[31px]"}`}>
          <button
            type="button"
            aria-label={t.label}
            className={`relative flex h-full w-full items-center justify-center ${
              t.on ? "border border-[#a9adb0] bg-gradient-to-br from-[#dfe2e5] to-[#f3f4f6]" : ""
            }`}
          >
            {t.icon}
            {t.flyout && (
              <Svg w={4} h={4} className="absolute bottom-[2px] right-px"><path d="M4 0v4H0z" fill="#333" /></Svg>
            )}
          </button>
        </div>
      ))}
    </div>
  );
}

/* ---------- graphics area ---------- */

function Canvas() {
  return (
    <div className="relative flex-1">
      <svg className="absolute left-0 top-0" width="518" height="350" viewBox="194 163 518 350" fill="none" aria-hidden="true">
        <rect x="278.500" y="240.500" width="316" height="195" stroke="#2c93b3" />
        <path
          d="M371.500 268l9.500 30.500h31l-25.500 18 10 30-25-18-25 18 9.500-30-25.500-18h31.500z"
          stroke="#2088ac"
        />
        <path d="M371.500 311.500 617 290" stroke="#4fbf62" />
        <path d="M437 337.500h10" stroke="#e0343a" />
        <path d="M436.500 338v10" stroke="#4cd8ea" />
        <circle cx="436.500" cy="337.500" r="3" fill="#35e23c" />
        <circle cx="447.500" cy="337.500" r="2" fill="#e0343a" />
        <circle cx="436.500" cy="348.500" r="2" fill="#4ce8f4" />
      </svg>
      <p className="absolute left-12 top-[5px] flex h-[67px] w-[282px] items-center whitespace-nowrap border border-[#2a4a7a] bg-white pl-[5px] text-[15px] font-bold leading-5 text-[#9414dc] shadow-[5px_5px_4px_rgba(0,0,0,0.45)]">
        为方便阵列，把这三线合并到一个组上
      </p>
    </div>
  );
}

/* ---------- status bar ---------- */

const Divider = () => <div className="h-6 w-[2px] border-l border-[#c3c6c8] bg-white" />;

function StatusBar() {
  return (
    <footer className="flex h-[33px] items-center border-t-2 border-[#949698] bg-[#ebedef] pr-[18px] text-[12px] text-[#444]">
      <div className="flex w-[58px] items-center gap-2 pl-3">
        <Svg w={16} h={16}>
          <path d="M.5.500h4v4h-4zM.5 9.500h4v4h-4zM8.500 9.500h4v4h-4zM2.500 4.500v5M4.500 11.500h4" stroke="#334" />
        </Svg>
        <Svg w={16} h={16}>
          <circle cx="8" cy="8" r="7" fill="#2f9fc0" />
          <path d="M2 10c3-7 8-8 12-6-1 5-5 8-12 6z" fill="#d9dc3c" />
        </Svg>
      </div>
      <Divider />
      <div className="ml-[11px] size-[5px] rounded-full bg-[#1a1ab5]" />
      <span className="ml-[5px] whitespace-nowrap text-[11px]">123 重新生成成功完成。</span>
      <div className="ml-auto flex items-center">
        <Divider />
        <div className="w-[34px]" />
        <Divider />
        <div className="flex w-[30px] items-center gap-[1px] pl-[3px]">
          <span className="size-[10px] rounded-full bg-[#3fcb46]" />
          <span className="ml-px size-[6px] rounded-full bg-[#c9cbcd]" />
          <span className="size-[6px] rounded-full bg-[#c9cbcd]" />
        </div>
        <Divider />
        <button type="button" aria-label="查找" className="mx-[2px] flex h-[22px] w-10 items-center justify-center rounded-[3px] border border-[#adb1b4] bg-gradient-to-b from-white to-[#e6e8ea]">
          <Binoculars />
        </button>
        <Divider />
        <div className="flex w-[94px] gap-[6px] pl-px">
          <span>选择了</span>
          <span>1</span>
          <span>项</span>
        </div>
        <div className="relative">
          <select
            aria-label="选择过滤器"
            className="block h-[19px] w-[166px] appearance-none rounded-none border border-[#b4b8bb] bg-gradient-to-b from-[#eef0f1] to-white pl-[5px] text-[12px] leading-4 text-[#444]"
          >
            <option>智能</option>
          </select>
          <span className="pointer-events-none absolute inset-y-0 right-0 flex w-[15px] items-center justify-center border border-[#b4b8bb]">
            <Svg w={7} h={5}><path d="M0 0h7L3.500 5z" fill="#444" /></Svg>
          </span>
        </div>
      </div>
    </footer>
  );
}

/* ---------- annotations and watermark ---------- */

function Annotations() {
  return (
    <svg className="pointer-events-none absolute left-0 top-0" width="240" height="557" viewBox="0 0 240 557" fill="none" aria-hidden="true">
      <defs>
        <filter id="shade" x="-20%" y="-20%" width="150%" height="150%">
          <feDropShadow dx="4" dy="4" stdDeviation="2" floodColor="#000" floodOpacity=".4" />
        </filter>
        <linearGradient id="ice" x1="0" y1="0" x2="0" y2="1">
          <stop offset="0" stopColor="#8ee0fa" />
          <stop offset="1" stopColor="#2a9fd6" />
        </linearGradient>
      </defs>
      <g filter="url(#shade)">
        <path d="M229 213 127 335" stroke="#b80c10" strokeWidth="3" />
        <path d="M117 346l4-17 13 11z" fill="#b80c10" />
        <rect x="40" y="375" width="75" height="61" stroke="#b21016" strokeWidth="2" />
      </g>
      <g
        fontFamily="Lato"
        fontStyle="italic"
        fontWeight="400"
        fontSize="36"
        fill="url(#ice)"
        stroke="#1b6fa0"
        strokeWidth="2"
        paintOrder="stroke"
      >
        <text x="16" y="541">i</text>
        <text x="30" y="541">C</text>
        <text x="58" y="541">A</text>
        <text x="92" y="541">X</text>
      </g>
      <ellipse cx="38" cy="512" rx="6" ry="5" fill="#f08a24" stroke="#a04a10" />
      <text x="35" y="515" fontFamily="Lato" fontWeight="700" fontSize="8" fill="#fff">@</text>
      <rect x="8" y="542" width="117" height="8" rx="1" fill="#1b95cf" stroke="#125c8a" />
      <text x="23" y="549" fontFamily="DejaVu Sans" fontStyle="italic" fontWeight="700" fontSize="9" fill="#fff">
        WWW.iCAX.ORG
      </text>
    </svg>
  );
}

export default function App() {
  return (
    <div className="relative flex min-h-screen border border-[#5c5c5e] bg-[#98989a] p-[3px] font-['Noto_Sans','Noto_Sans_CJK_SC',sans-serif]">
      <div className="flex min-w-0 flex-1 flex-col bg-[#fbfcfd]">
        <TitleBar />
        <RibbonTabs />
        <Ribbon />
        <main className="flex flex-1 pl-1">
          <ModelTree />
          <ViewToolbar />
          <Canvas />
        </main>
        <StatusBar />
      </div>
      <Annotations />
    </div>
  );
}
